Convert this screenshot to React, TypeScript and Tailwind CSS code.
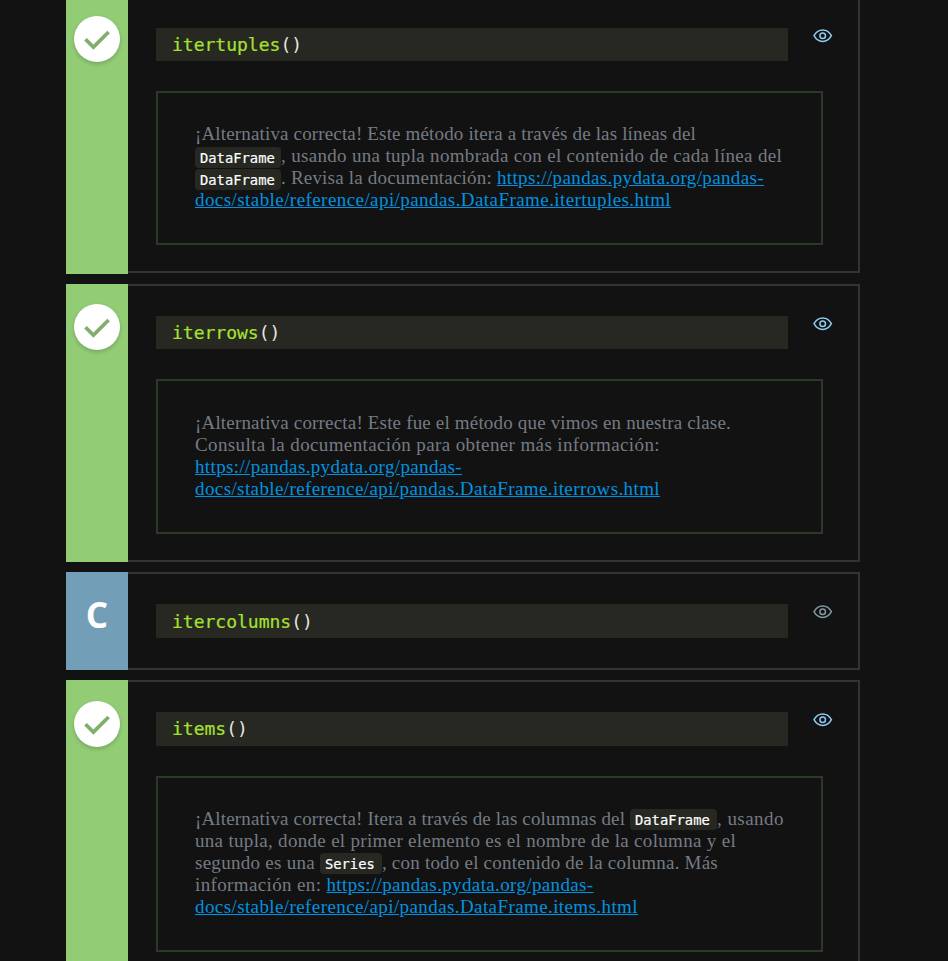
type Seg = { t: string; c: string; kind?: "link" | "code" };
type Item = {
  name: string;
  card: string;
  body: string;
  mark: string;
  code: string;
  box?: string;
  chip?: string;
  lines?: Seg[][];
};

const DOCS = "https://pandas.pydata.org/pandas-";

const items: Item[] = [
  {
    name: "itertuples",
    card: "-mt-1 h-[278px]",
    body: "mb-px",
    mark: "pt-5",
    code: "h-[33px] leading-[33px]",
    box: "h-[154px] pt-[30px]",
    chip: "mt-[2px]",
    lines: [
      [{ t: "¡Alternativa correcta! Este método itera a través de las líneas del", c: "tracking-[0.155px]" }],
      [
        { t: "DataFrame", c: "w-[86px]", kind: "code" },
        { t: ", usando una tupla nombrada con el contenido de cada línea del", c: "tracking-[0.321px]" },
      ],
      [
        { t: "DataFrame", c: "w-[86px]", kind: "code" },
        { t: ". Revisa la documentación: ", c: "tracking-[0.2px]" },
        { t: DOCS, c: "tracking-[0.364px]", kind: "link" },
      ],
      [{ t: "docs/stable/reference/api/pandas.DataFrame.itertuples.html", c: "tracking-[0.431px]", kind: "link" }],
    ],
  },
  {
    name: "iterrows",
    card: "h-[278px]",
    body: "",
    mark: "pt-5",
    code: "h-[33px] leading-[33px]",
    box: "h-[155px] pt-[31px]",
    lines: [
      [{ t: "¡Alternativa correcta! Este fue el método que vimos en nuestra clase.", c: "tracking-[0.175px]" }],
      [{ t: "Consulta la documentación para obtener más información:", c: "tracking-[0.376px]" }],
      [{ t: DOCS, c: "tracking-[0.364px]", kind: "link" }],
      [{ t: "docs/stable/reference/api/pandas.DataFrame.iterrows.html", c: "tracking-[0.4px]", kind: "link" }],
    ],
  },
  {
    name: "itercolumns",
    card: "h-[98px]",
    body: "",
    mark: "pt-[19px]",
    code: "h-[34px] leading-[35px]",
  },
  {
    name: "items",
    card: "h-[300px]",
    body: "",
    mark: "pt-[21px]",
    code: "h-[34px] leading-[33px]",
    box: "h-[176px] pt-[30px]",
    chip: "mt-px",
    lines: [
      [
        { t: "¡Alternativa correcta! Itera a través de las columnas del ", c: "tracking-[0.16px]" },
        { t: "DataFrame", c: "w-[87px]", kind: "code" },
        { t: ", usando", c: "tracking-[0.46px]" },
      ],
      [{ t: "una tupla, donde el primer elemento es el nombre de la columna y el", c: "tracking-[0.31px]" }],
      [
        { t: "segundo es una ", c: "tracking-[0.273px]" },
        { t: "Series", c: "w-[62px]", kind: "code" },
        { t: ", con todo el contenido de la columna. Más", c: "tracking-[0.212px]" },
      ],
      [
        { t: "información en: ", c: "tracking-[0.369px]" },
        { t: DOCS, c: "tracking-[0.364px]", kind: "link" },
      ],
      [{ t: "docs/stable/reference/api/pandas.DataFrame.items.html", c: "tracking-[0.404px]", kind: "link" }],
    ],
  },
];

function CheckBadge() {
  return (
    <div className="size-[46px] rounded-full bg-white shadow-[0_2px_4px_rgba(0,0,0,0.2)]">
      <svg viewBox="0 0 46 46" className="size-[46px] fill-none stroke-[#82ae6c] stroke-[3.7]">
        <path d="M11.500 23.200 19.400 31.100 34.600 16" />
      </svg>
    </div>
  );
}

function Eye({ color }: { color: string }) {
  return (
    <svg viewBox="0 0 20 14" className={`mt-px ml-[25px] h-[14px] w-5 fill-none stroke-[1.5] ${color}`}>
      <path d="M1 6.700C3 3 6 1 9.700 1s6.700 2 8.700 5.700c-2 3.700-5 5.700-8.700 5.700S3 10.400 1 6.700z" />
      <circle cx="9.700" cy="6.700" r="2.800" />
    </svg>
  );
}

function Segment({ seg, chip }: { seg: Seg; chip?: string }) {
  if (seg.kind === "code") {
    return (
      <code
        className={`${seg.c} ${chip ?? ""} h-[21px] shrink-0 rounded bg-[#272822] pl-[5px] font-['DejaVu_Sans_Mono',monospace] text-[13.800px] text-white [-webkit-text-stroke:0.2px]`}
      >
        {seg.t}
      </code>
    );
  }
  if (seg.kind === "link") {
    return <a className={`${seg.c} text-[#0092e0] underline`}>{seg.t}</a>;
  }
  return <span className={seg.c}>{seg.t}</span>;
}

export default function App() {
  return (
    <div className="flex h-[961px] flex-col gap-[10px] overflow-hidden bg-[#121212] pl-[66px]">
      {items.map((it) => (
        <div key={it.name} className={`${it.card} flex w-[794px] shrink-0`}>
          <div className={`${it.mark} flex w-[62px] shrink-0 justify-center ${it.lines ? "bg-[#92cd75]" : "bg-[#729fb7]"}`}>
            {it.lines ? (
              <CheckBadge />
            ) : (
              <span className="font-['Open_Sans',sans-serif] text-[35px] leading-[48px] font-bold text-white">C</span>
            )}
          </div>
          <div className={`${it.body} flex-1 border-2 border-l-0 border-[#333] pt-[30px] pl-7`}>
            <div className="flex">
              <div
                className={`${it.code} w-[632px] bg-[#272822] pl-4 font-['DejaVu_Sans_Mono',monospace] text-[18px] text-[#e6e6e0]`}
              >
                <span className="text-[#a6e22e] [-webkit-text-stroke:0.2px]">{it.name}</span>()
              </div>
              <Eye color={it.lines ? "stroke-[#8dccf0]" : "stroke-[#8199a6]"} />
            </div>
            {it.lines && (
              <div
                className={`${it.box} mt-[30px] w-[667px] border-2 border-[#2b3a26] pl-[37px] font-['Liberation_Serif',serif] text-[19px] leading-[22px] text-[#757b83]`}
              >
                {it.lines.map((line, k) => (
                  <p key={k} className="flex h-[22px] whitespace-pre">
                    {line.map((seg, j) => (
                      <Segment key={j} seg={seg} chip={it.chip} />
                    ))}
                  </p>
                ))}
              </div>
            )}
          </div>
        </div>
      ))}
    </div>
  );
}
